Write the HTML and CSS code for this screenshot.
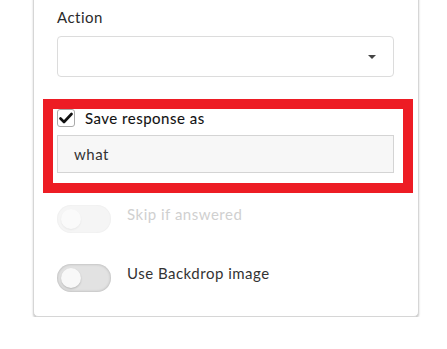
FILE: index.html
```html
<!DOCTYPE html>
<html>
<head>
<meta charset="utf-8">
<link rel="stylesheet" href="styles.css">
</head>
<body>
<div class="card">
  <div class="field-label">Action</div>
  <div class="select">
    <span class="caret"></span>
  </div>
  <div class="highlight">
    <label class="check-row">
      <span class="checkbox">
        <svg width="14" height="12" viewBox="0 0 14 12"><path d="M1.5 6.5 L5 10 L12.5 2" fill="none" stroke="#111" stroke-width="2.6" stroke-linecap="round" stroke-linejoin="round"/></svg>
      </span>
      <span class="check-text">Save response as</span>
    </label>
    <div class="text-input">what</div>
  </div>
  <div class="toggle-row disabled">
    <span class="toggle"><span class="knob"></span></span>
    <span class="toggle-text">Skip if answered</span>
  </div>
  <div class="toggle-row second">
    <span class="toggle"><span class="knob"></span></span>
    <span class="toggle-text">Use Backdrop image</span>
  </div>
</div>
</body>
</html>
```
FILE: styles.css
```css
html, body {
  margin: 0;
  padding: 0;
  background: #fff;
}
body {
  font-family: Lato, "Noto Sans", sans-serif;
  font-size: 15px;
  letter-spacing: 0.5px;
  color: #333;
  overflow: hidden;
}
.card {
  margin: -20px 0 0 33px;
  width: 386px;
  box-sizing: border-box;
  border: 1px solid #d6d6d6;
  border-radius: 5px;
  box-shadow: 0 2px 2px rgba(0,0,0,0.22);
  padding: 26px 24px 24px 23px;
  background: #fff;
}
.field-label {
  line-height: 20px;
  color: #2a2a2a;
}
.select {
  margin-top: 9px;
  height: 41px;
  box-sizing: border-box;
  border: 1px solid #dcdcdc;
  border-radius: 4px;
  display: flex;
  align-items: center;
  justify-content: flex-end;
  padding-right: 17px;
}
.caret {
  width: 0;
  height: 0;
  border-left: 4px solid transparent;
  border-right: 4px solid transparent;
  border-top: 4px solid #444;
}
.highlight {
  margin: 22px -19px 0 -14px;
  border: 10px solid #ed1c24;
  padding: 0 9px 10px 4px;
  background: #fff;
}
.check-row {
  display: flex;
  align-items: center;
  gap: 10px;
  height: 18px;
}
.checkbox {
  width: 18px;
  height: 18px;
  box-sizing: border-box;
  border: 1px solid #aaa;
  border-radius: 3px;
  display: flex;
  align-items: center;
  justify-content: center;
}
.check-text {
  color: #111;
  line-height: 18px;
  margin-top: -1px;
  -webkit-text-stroke: 0.1px #111;
}
.text-input {
  margin-top: 8px;
  height: 38px;
  box-sizing: border-box;
  border: 1px solid #d4d4d4;
  background: #f7f7f7;
  padding-left: 16px;
  display: flex;
  align-items: center;
  color: #333;
}
.toggle-row {
  display: flex;
  align-items: flex-start;
  gap: 16px;
  margin-top: 12px;
}
.toggle-row.second {
  margin-top: 31px;
}
.toggle {
  width: 54px;
  height: 28px;
  border-radius: 14px;
  background: #e2e2e2;
  box-shadow: inset 0 0 3px rgba(0,0,0,0.25);
  display: flex;
  align-items: center;
  padding-left: 4px;
  box-sizing: border-box;
  flex: none;
}
.knob {
  width: 20px;
  height: 20px;
  border-radius: 50%;
  background: #f8f8f8;
  box-shadow: 0 1px 2px rgba(0,0,0,0.2);
}
.toggle-text {
  line-height: 19px;
  color: #333;
}
.disabled .toggle {
  background: #f5f5f5;
  box-shadow: inset 0 0 2px rgba(0,0,0,0.06);
}
.disabled .knob {
  background: #fafafa;
  box-shadow: 0 1px 2px rgba(0,0,0,0.06);
}
.disabled .toggle-text {
  color: #d0d0d0;
}
```
